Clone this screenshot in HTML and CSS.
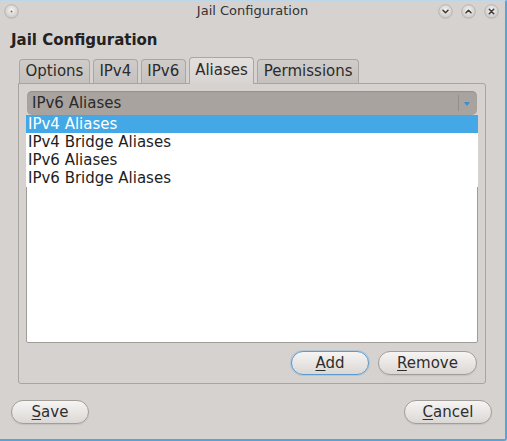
FILE: index.html
```html
<!DOCTYPE html>
<html>
<head>
<meta charset="utf-8">
<title>Jail Configuration</title>
<link rel="stylesheet" href="styles.css">
</head>
<body>
<div class="window">
  <div class="titlebar">
    <div class="tb-left">
      <svg class="wbtn" viewBox="0 0 15 15" width="15" height="15">
        <defs><radialGradient id="g0" cx="50%" cy="40%" r="60%"><stop offset="0" stop-color="#f6f5f4"/><stop offset="1" stop-color="#c8c4c1"/></radialGradient></defs>
        <circle cx="7.5" cy="7.5" r="6.8" fill="url(#g0)" stroke="#b3afab" stroke-width="0.8"/>
        <circle cx="7.5" cy="7.5" r="0.9" fill="#6a6a6a"/>
      </svg>
    </div>
    <div class="tb-title">Jail Configuration</div>
    <div class="tb-right">
      <svg class="wbtn" viewBox="0 0 15 15" width="15" height="15">
        <defs><radialGradient id="g1" cx="50%" cy="40%" r="60%"><stop offset="0" stop-color="#f6f5f4"/><stop offset="1" stop-color="#c8c4c1"/></radialGradient></defs>
        <circle cx="7.5" cy="7.5" r="6.8" fill="url(#g1)" stroke="#b3afab" stroke-width="0.8"/>
        <path d="M5 6.3 L7.5 8.8 L10 6.3" fill="none" stroke="#3a3a3a" stroke-width="1.5" stroke-linecap="round" stroke-linejoin="round"/>
      </svg>
      <svg class="wbtn" viewBox="0 0 15 15" width="15" height="15">
        <defs><radialGradient id="g2" cx="50%" cy="40%" r="60%"><stop offset="0" stop-color="#f6f5f4"/><stop offset="1" stop-color="#c8c4c1"/></radialGradient></defs>
        <circle cx="7.5" cy="7.5" r="6.8" fill="url(#g2)" stroke="#b3afab" stroke-width="0.8"/>
        <path d="M5 8.7 L7.5 6.2 L10 8.7" fill="none" stroke="#3a3a3a" stroke-width="1.5" stroke-linecap="round" stroke-linejoin="round"/>
      </svg>
      <svg class="wbtn" viewBox="0 0 15 15" width="15" height="15">
        <defs><radialGradient id="g3" cx="50%" cy="40%" r="60%"><stop offset="0" stop-color="#f6f5f4"/><stop offset="1" stop-color="#c8c4c1"/></radialGradient></defs>
        <circle cx="7.5" cy="7.5" r="6.8" fill="url(#g3)" stroke="#b3afab" stroke-width="0.8"/>
        <path d="M5.3 5.3 L9.7 9.7 M9.7 5.3 L5.3 9.7" fill="none" stroke="#3a3a3a" stroke-width="1.5" stroke-linecap="round"/>
      </svg>
    </div>
  </div>

  <div class="content">
    <h1 class="heading">Jail Configuration</h1>
    <div class="tabwidget">
      <div class="tabs">
        <div class="tab">Options</div>
        <div class="tab">IPv4</div>
        <div class="tab">IPv6</div>
        <div class="tab active">Aliases</div>
        <div class="tab">Permissions</div>
      </div>
      <div class="panel">
        <div class="combo">
          <span class="combo-text">IPv6 Aliases</span>
          <span class="combo-sep"></span>
          <span class="combo-arrow"></span>
        </div>
        <div class="listbox"></div>
        <div class="panel-buttons">
          <button class="btn btn-add btn-focus"><u>A</u>dd</button>
          <button class="btn btn-remove"><u>R</u>emove</button>
        </div>
        <ul class="popup">
          <li class="popup-item selected">IPv4 Aliases</li>
          <li class="popup-item">IPv4 Bridge Aliases</li>
          <li class="popup-item">IPv6 Aliases</li>
          <li class="popup-item">IPv6 Bridge Aliases</li>
        </ul>
      </div>
    </div>
    <div class="dialog-buttons">
      <button class="btn btn-save"><u>S</u>ave</button>
      <button class="btn btn-cancel"><u>C</u>ancel</button>
    </div>
  </div>
</div>
</body>
</html>
```

FILE: styles.css
```css
html, body {
  margin: 0;
  padding: 0;
}

body {
  background: #d6d2d0;
  font-family: "DejaVu Sans", "Noto Sans", sans-serif;
  font-size: 15px;
  color: #2e2e2e;
}

.window {
  width: 507px;
  height: 441px;
  box-sizing: border-box;
  border-right: 2px solid #5aa3d8;
  border-bottom: 2px solid #5aa3d8;
  border-top: 1px solid #bcd6ea;
  border-bottom-right-radius: 3px;
  display: flex;
  flex-direction: column;
  overflow: hidden;
}

.titlebar {
  height: 21px;
  display: grid;
  grid-template-columns: 1fr auto 1fr;
  align-items: center;
  font-size: 13px;
  color: #333;
}

.tb-left {
  display: flex;
  padding-left: 4px;
}

.tb-title {
  line-height: 19px;
  margin-bottom: 2px;
}

.tb-right {
  display: flex;
  justify-content: flex-end;
  gap: 8px;
  padding-right: 6px;
}

.wbtn {
  display: block;
}

.content {
  flex: 1;
  display: flex;
  flex-direction: column;
  padding: 0 13px 0 11px;
}

.heading {
  margin: 9px 0 0;
  font-size: 15px;
  font-weight: bold;
  line-height: 18px;
  color: #222;
}

.tabwidget {
  margin: 8px 6px 0 7px;
}

.tabs {
  display: flex;
  align-items: flex-end;
  gap: 3px;
  padding-left: 1px;
  height: 26px;
}

.tab {
  height: 24px;
  box-sizing: border-box;
  padding: 0 5.5px;
  border: 1px solid #aaa6a2;
  border-bottom: none;
  border-radius: 4px 4px 0 0;
  background: linear-gradient(#d0ccc9, #c5c1be);
  line-height: 23px;
  color: #2b2b2b;
}

.tab.active {
  height: 27px;
  margin-bottom: -1px;
  line-height: 24px;
  background: linear-gradient(#e2dfdd, #d8d4d2);
  position: relative;
  z-index: 1;
}

.panel {
  height: 301px;
  box-sizing: border-box;
  border: 1px solid #a8a4a0;
  border-radius: 0 3px 3px 3px;
  padding: 7px 8px 8px;
  display: flex;
  flex-direction: column;
  position: relative;
}

.combo {
  height: 24px;
  box-sizing: border-box;
  border-radius: 5px;
  background: #a8a39e;
  box-shadow: inset 0 1px 1px rgba(0,0,0,0.12);
  display: flex;
  align-items: center;
  padding-left: 5px;
  color: #2a2a2a;
}

.combo-text {
  flex: 1;
  line-height: 24px;
}

.combo-sep {
  width: 1px;
  height: 16px;
  background: #948f8a;
  margin-right: 5px;
}

.combo-arrow {
  width: 0;
  height: 0;
  border-left: 3.5px solid transparent;
  border-right: 3.5px solid transparent;
  border-top: 4px solid #3a8fd0;
  margin-right: 7px;
  margin-top: 2px;
}

.listbox {
  flex: 1;
  margin: 4px -1px 0;
  background: #fff;
  border: 1px solid #a09c98;
  border-radius: 2px;
}

.panel-buttons {
  display: flex;
  justify-content: flex-end;
  gap: 9px;
  margin-top: 8px;
}

.btn {
  height: 24px;
  box-sizing: border-box;
  border: 1px solid #a19d99;
  border-radius: 12px;
  background: linear-gradient(#f6f5f4, #dbd7d4);
  font-family: "DejaVu Sans", "Noto Sans", sans-serif;
  font-size: 15px;
  color: #2e2e2e;
  padding: 0;
  line-height: 22px;
  box-shadow: 0 1px 1px rgba(0,0,0,0.08);
}

.btn u {
  text-underline-offset: 2px;
}

.btn-focus {
  border-color: #5b9bcf;
  box-shadow: 0 0 0 1px rgba(120,176,220,0.35);
}

.btn-add { width: 78px; }
.btn-remove { width: 99px; }
.btn-save { width: 78px; }
.btn-cancel { width: 88px; }

.popup {
  position: absolute;
  left: 7px;
  top: 31px;
  width: 452px;
  margin: 0;
  padding: 0;
  list-style: none;
  background: #fff;
  z-index: 2;
}

.popup-item {
  height: 18px;
  line-height: 18px;
  padding-left: 2px;
  color: #1e1e1e;
}

.popup-item.selected {
  background: #43a8e5;
  color: #fff;
}

.dialog-buttons {
  display: flex;
  justify-content: space-between;
  margin-top: 16px;
}
```
